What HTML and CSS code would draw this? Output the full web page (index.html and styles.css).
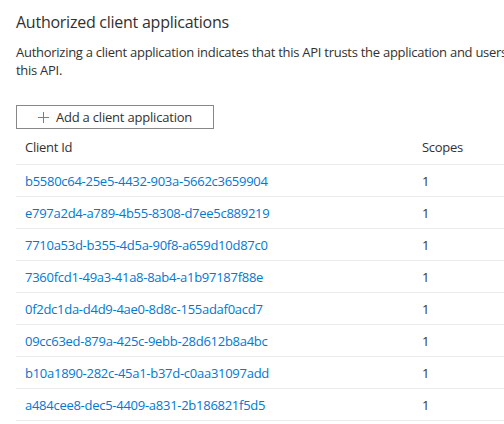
FILE: index.html
```html
<!DOCTYPE html>
<html lang="en">
<head>
<meta charset="utf-8">
<title>Authorized client applications</title>
<link rel="stylesheet" href="styles.css">
</head>
<body>
<main class="page">
  <h2 class="title">Authorized client applications</h2>
  <p class="desc"><span class="line">Authorizing a client application indicates that this API trusts the application and users</span><br><span class="line">this API.</span></p>
  <button class="add-btn" type="button">
    <svg class="plus" width="11" height="11" viewBox="0 0 11 11" aria-hidden="true"><path d="M5.5 0v11M0 5.5h11" stroke="#3b8fd9" stroke-width="1" fill="none"/></svg>
    <span>Add a client application</span>
  </button>
  <div class="table">
    <div class="row head"><div>Client Id</div><div>Scopes</div></div>
    <div class="row"><a href="#">b5580c64-25e5-4432-903a-5662c3659904</a><div>1</div></div>
    <div class="row"><a href="#">e797a2d4-a789-4b55-8308-d7ee5c889219</a><div>1</div></div>
    <div class="row"><a href="#">7710a53d-b355-4d5a-90f8-a659d10d87c0</a><div>1</div></div>
    <div class="row"><a href="#">7360fcd1-49a3-41a8-8ab4-a1b97187f88e</a><div>1</div></div>
    <div class="row"><a href="#">0f2dc1da-d4d9-4ae0-8d8c-155adaf0acd7</a><div>1</div></div>
    <div class="row"><a href="#">09cc63ed-879a-425c-9ebb-28d612b8a4bc</a><div>1</div></div>
    <div class="row"><a href="#">b10a1890-282c-45a1-b37d-c0aa31097add</a><div>1</div></div>
    <div class="row"><a href="#">a484cee8-dec5-4409-a831-2b186821f5d5</a><div>1</div></div>
  </div>
</main>
</body>
</html>
```
FILE: styles.css
```css
html, body {
  margin: 0;
  padding: 0;
  overflow: hidden;
  background: #ffffff;
}
body {
  font-family: "Open Sans", "Noto Sans", "Liberation Sans", sans-serif;
  font-size: 13px;
  letter-spacing: -0.27px;
  color: #323130;
}
.page {
  width: 488px;
  padding: 0 0 0 16px;
}
.title {
  margin: 0;
  padding-top: 10px;
  font-size: 16px;
  font-weight: 400;
  letter-spacing: -0.25px;
  line-height: 24px;
  color: #323130;
}
.desc {
  margin: 9px 0 0 0;
  line-height: 18px;
  white-space: nowrap;
}
.add-btn {
  margin-top: 26px;
  width: 198px;
  height: 24px;
  border: 1px solid #8a8886;
  border-radius: 0;
  background: #ffffff;
  display: flex;
  align-items: center;
  justify-content: center;
  gap: 7px;
  padding: 0;
  font: inherit;
  letter-spacing: -0.2px;
  color: #323130;
}
.plus {
  display: block;
}
.table {
  margin-top: 4px;
  width: 488px;
}
.row {
  display: grid;
  grid-template-columns: 397px 1fr;
  align-items: center;
  height: 31px;
  padding-left: 9px;
  border-bottom: 1px solid #edebe9;
}
.row a {
  color: #0078d4;
  text-decoration: none;
}
.head {
  height: 27px;
  padding-bottom: 4px;
  color: #323130;
}
```
